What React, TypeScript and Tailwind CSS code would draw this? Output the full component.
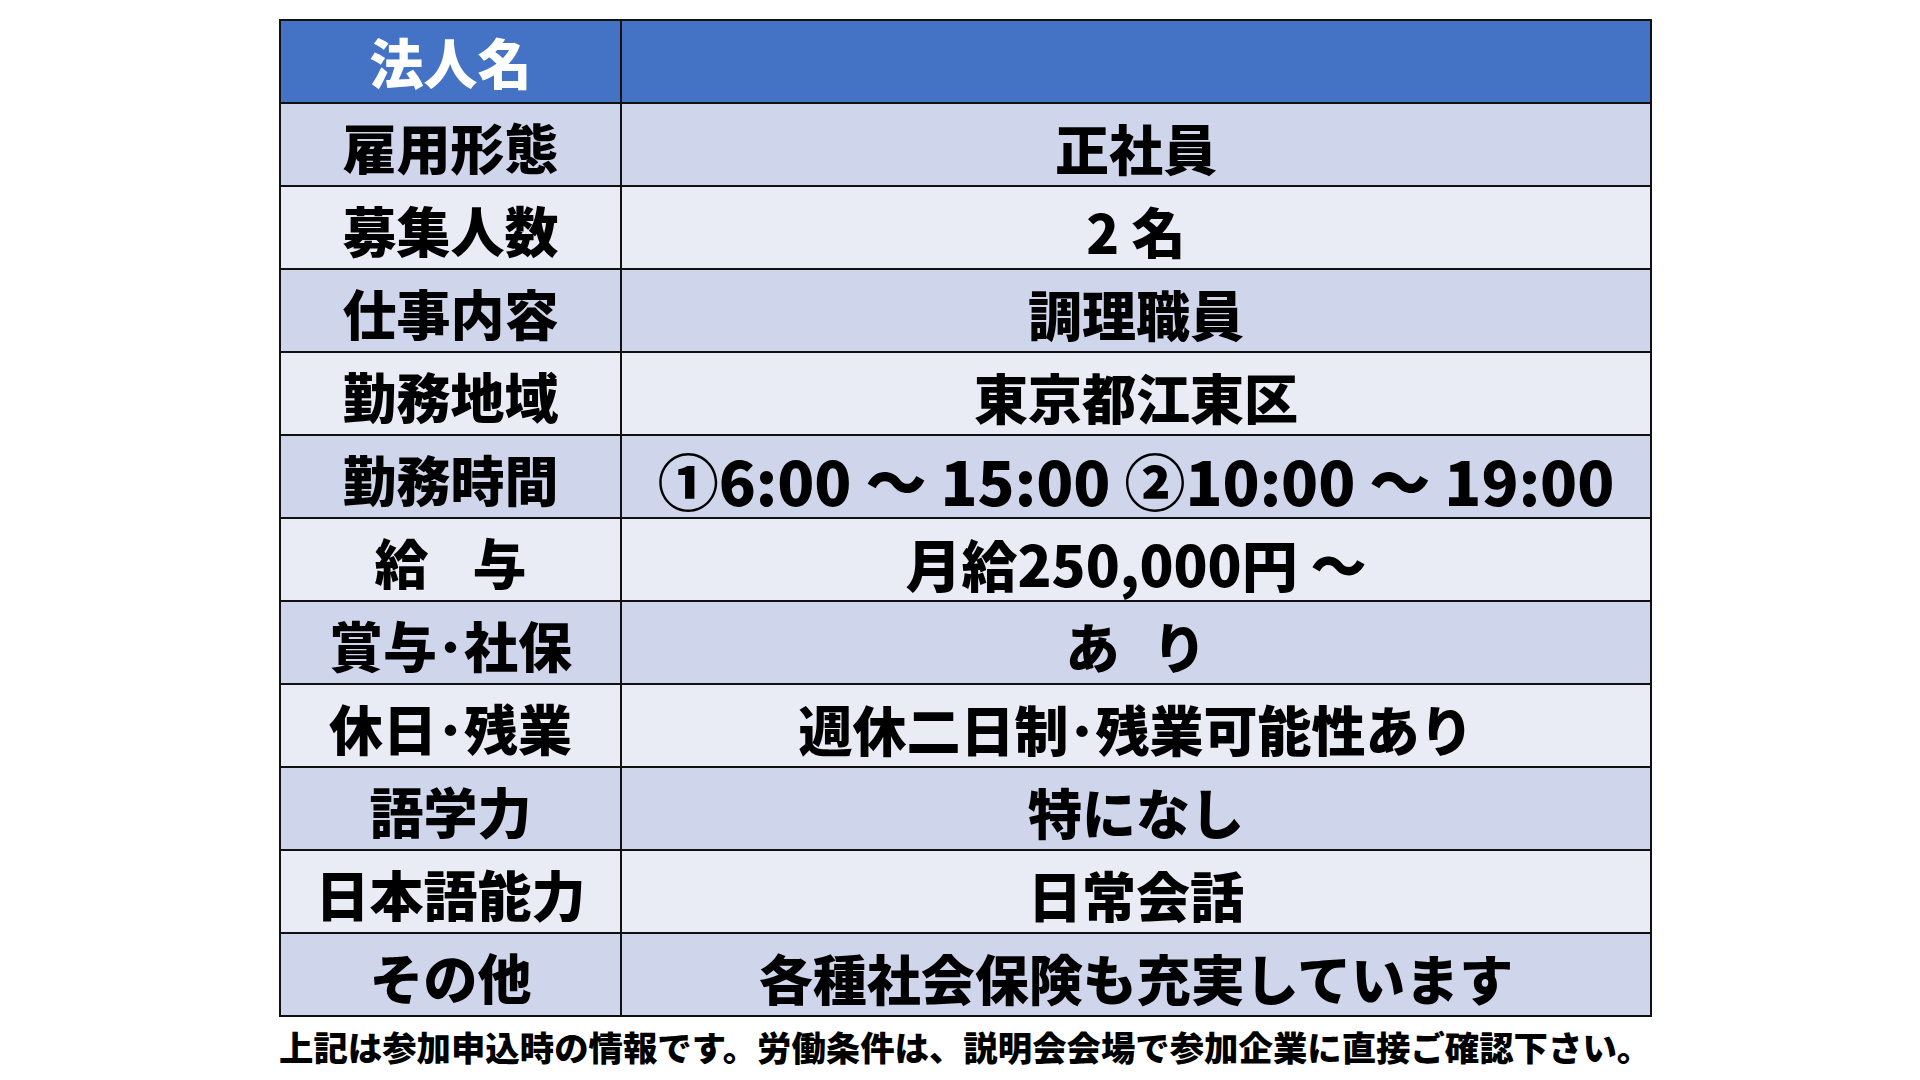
import React from 'react';

const rows: { label: React.ReactNode; value: React.ReactNode; size?: string }[] = [
  { label: '雇用形態', value: '正社員' },
  { label: '募集人数', value: '2 名' },
  { label: '仕事内容', value: '調理職員' },
  { label: '勤務地域', value: '東京都江東区' },
  { label: '勤務時間', value: '①6:00 ～ 15:00 ②10:00 ～ 19:00', size: 'text-[61px]' },
  {
    label: (
      <>
        給<span className="inline-block w-[44px]" />与
      </>
    ),
    value: '月給250,000円 ～',
    size: 'text-[56px]',
  },
  {
    label: '賞与･社保',
    value: (
      <>
        あ<span className="inline-block w-[33px]" />り
      </>
    ),
  },
  { label: '休日･残業', value: '週休二日制･残業可能性あり' },
  { label: '語学力', value: '特になし' },
  { label: '日本語能力', value: '日常会話' },
  { label: 'その他', value: '各種社会保険も充実しています' },
];

export default function App() {
  return (
    <div
      className="w-[1920px] h-[1080px] bg-white pt-[19px] pl-[279px] text-black"
      style={{ fontFamily: '"Noto Sans CJK JP", "Noto Sans", sans-serif' }}
    >
      <div className="w-[1373px] border-2 border-[#111] border-t-0 font-black">
        {/* header */}
        <div className="grid grid-cols-[341px_1fr] h-[83px] border-t-2 border-[#111] bg-[#4472C4]">
          <div className="flex items-center justify-center border-r-2 border-[#111] text-[54px] leading-none text-white">
            法人名
          </div>
          <div />
        </div>
        {rows.map((row, i) => (
          <div
            key={i}
            className={`grid grid-cols-[341px_1fr] h-[83px] border-t-2 border-[#111] ${
              i % 2 === 0 ? 'bg-[#CFD5EA]' : 'bg-[#E9EBF5]'
            }`}
          >
            <div className="flex items-center justify-center pt-[4px] border-r-2 border-[#111] text-[54px] leading-none whitespace-nowrap">
              {row.label}
            </div>
            <div
              className={`flex items-center justify-center pt-[6px] leading-none whitespace-nowrap ${
                row.size ?? 'text-[54px]'
              }`}
            >
              {row.value}
            </div>
          </div>
        ))}
      </div>
      <p className="mt-[12px] text-[34.4px] leading-none font-black whitespace-nowrap">
        上記は参加申込時の情報です。労働条件は、説明会会場で参加企業に直接ご確認下さい。
      </p>
    </div>
  );
}
